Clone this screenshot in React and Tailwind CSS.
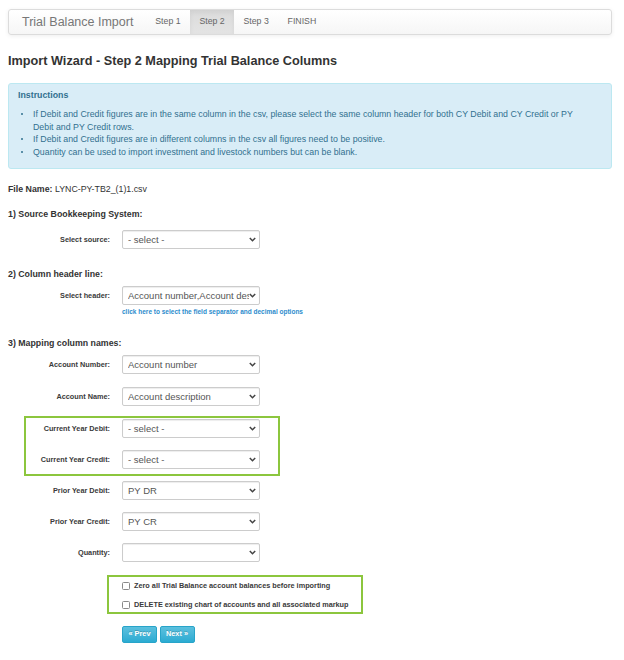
import React from 'react';

const Chevron = () => (
  <svg width="7" height="5" viewBox="0 0 7 5" className="shrink-0">
    <path d="M0.8 0.9 L3.5 3.7 L6.2 0.9" fill="none" stroke="#444" strokeWidth="1.5" />
  </svg>
);

function Select({ value }) {
  return (
    <div className="flex h-[19px] w-[138px] shrink-0 items-center rounded-[2px] border border-[#ccc] bg-white pl-[5px] pr-[3px] shadow-[inset_0_1px_1px_rgba(0,0,0,0.075)]">
      <span className="flex-1 overflow-hidden whitespace-nowrap text-[9.5px] leading-[12px] text-[#555]">
        {value}
      </span>
      <Chevron />
    </div>
  );
}

function Row({ label, value, narrow, className = '' }) {
  return (
    <div className={`flex items-center ${className}`}>
      <span
        className={`${narrow ? 'w-[84px]' : 'w-[102px]'} shrink-0 pt-[2px] text-right text-[7.3px] font-bold text-[#3a3a3a]`}
      >
        {label}
      </span>
      <div className="ml-[12px]">
        <Select value={value} />
      </div>
    </div>
  );
}

function Checkbox({ label, className = '' }) {
  return (
    <div className={`flex h-[12px] items-center ${className}`}>
      <span className="h-[8px] w-[8px] shrink-0 rounded-[1.5px] border border-[#8a8a8a] bg-white" />
      <span className="ml-[4px] whitespace-nowrap text-[7.3px] font-bold text-[#3a3a3a]">{label}</span>
    </div>
  );
}

const steps = ['Step 1', 'Step 2', 'Step 3', 'FINISH'];

export default function App() {
  return (
    <div className="min-h-[660px] w-full bg-white pl-2 pr-3 pt-[9px] font-['Liberation_Sans',Arial,sans-serif] text-[#333]">
      {/* Wizard navbar */}
      <nav className="flex h-[26px] items-stretch rounded-[3px] border border-[#dcdcdc] bg-gradient-to-b from-white to-[#f6f6f6] shadow-[0_1px_4px_rgba(0,0,0,0.07)]">
        <span className="flex items-center pl-[13px] pr-[12.5px] text-[12.5px] text-[#777]">
          Trial Balance Import
        </span>
        {steps.map((s) => (
          <span
            key={s}
            className={`flex items-center px-[9.4px] text-[8.75px] text-[#666] ${
              s === 'Step 2'
                ? 'bg-gradient-to-b from-[#dbdbdb] to-[#e4e4e4] shadow-[inset_0_2px_5px_rgba(0,0,0,0.06)]'
                : ''
            }`}
          >
            {s}
          </span>
        ))}
      </nav>

      <h1 className="mt-[18px] text-[12.7px] font-bold leading-[16px] text-[#333]">
        Import Wizard - Step 2 Mapping Trial Balance Columns
      </h1>

      {/* Instructions */}
      <div className="mt-[14px] rounded-[3px] border border-[#bce8f1] bg-[#d9edf7] pb-[10px] pl-[9px] pr-[9px] pt-[5px] text-[#31708f]">
        <div className="text-[8.8px] font-bold leading-[12px]">Instructions</div>
        <ul className="mt-[7px] pr-[14px] text-[8.8px] leading-[12.5px]">
          {[
            'If Debit and Credit figures are in the same column in the csv, please select the same column header for both CY Debit and CY Credit or PY Debit and PY Credit rows.',
            'If Debit and Credit figures are in different columns in the csv all figures need to be positive.',
            'Quantity can be used to import investment and livestock numbers but can be blank.',
          ].map((t) => (
            <li key={t} className="flex">
              <span className="flex h-[12.5px] w-[15px] shrink-0 items-center pl-[2.5px]">
                <span className="h-[2.4px] w-[2.4px] rounded-full bg-[#31708f]" />
              </span>
              <span>{t}</span>
            </li>
          ))}
        </ul>
      </div>

      <div className="mt-[14px] text-[8.8px] leading-[12px]">
        <span className="font-bold">File Name:</span> LYNC-PY-TB2_(1)1.csv
      </div>

      <div className="mt-[13px] text-[8.8px] font-bold leading-[12px]">1) Source Bookkeeping System:</div>
      <Row className="mt-[10px]" label="Select source:" value="- select -" />

      <div className="mt-[19px] text-[8.8px] font-bold leading-[12px]">2) Column header line:</div>
      <Row className="mt-[6px]" label="Select header:" value="Account number,Account description" />
      <div className="ml-[114px] mt-[2px] text-[6.5px] font-bold leading-[9px] text-[#2b8ccd]">
        click here to select the field separator and decimal options
      </div>

      <div className="mt-[21px] text-[8.8px] font-bold leading-[12px]">3) Mapping column names:</div>
      <Row className="mt-[6px]" label="Account Number:" value="Account number" />
      <Row className="mt-[13px]" label="Account Name:" value="Account description" />

      <div className="ml-[16px] mt-[10px] w-[256px] border-2 border-[#8cc63e] pb-[5px] pt-[1px]">
        <Row narrow label="Current Year Debit:" value="- select -" />
        <Row narrow className="mt-[12px]" label="Current Year Credit:" value="- select -" />
      </div>

      <Row className="mt-[5px]" label="Prior Year Debit:" value="PY DR" />
      <Row className="mt-[12px]" label="Prior Year Credit:" value="PY CR" />
      <Row className="mt-[12px]" label="Quantity:" value="" />

      <div className="ml-[99px] mt-[13px] w-[256px] border-2 border-[#8cc63e] pb-[1px] pl-[13px] pt-[3px]">
        <Checkbox label="Zero all Trial Balance account balances before importing" />
        <Checkbox className="mt-[7px]" label="DELETE existing chart of accounts and all associated markup" />
      </div>

      <div className="ml-[114px] mt-[12px] flex gap-[2.5px]">
        {['« Prev', 'Next »'].map((b) => (
          <button
            key={b}
            type="button"
            className="h-[17px] w-[35px] rounded-[2px] border border-[#28a4c9] bg-gradient-to-b from-[#5bc0de] to-[#2aabd2] text-[7.3px] font-bold text-white [text-shadow:0_-1px_0_rgba(0,0,0,0.2)]"
          >
            {b}
          </button>
        ))}
      </div>
    </div>
  );
}
